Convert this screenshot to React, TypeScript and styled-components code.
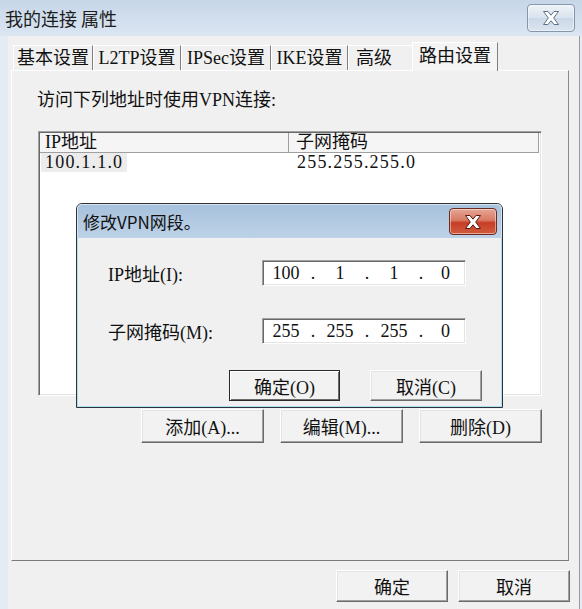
import styled, { createGlobalStyle } from 'styled-components';

const GlobalStyle = createGlobalStyle`
  html, body {
    margin: 0;
    padding: 0;
    background: #f0f0f0;
  }
  body {
    font-family: "Liberation Serif", "Noto Sans CJK SC", serif;
    color: #111;
  }
`;

const Window = styled.div`
  position: relative;
  width: 582px;
  height: 609px;
  overflow: hidden;
  display: flex;
  flex-direction: column;
  background: #f0f0f0;
`;

const TitleBar = styled.div`
  flex: none;
  height: 36px;
  box-sizing: border-box;
  display: flex;
  align-items: center;
  justify-content: space-between;
  padding: 0 7px 0 5px;
  background: linear-gradient(#c6d6e8, #dbe6f2);
`;

const TitleText = styled.span`
  font-family: "Noto Sans CJK SC", sans-serif;
  font-size: 18px;
  color: #1c1c1c;
`;

const CaptionButton = styled.div<{ $danger?: boolean }>`
  width: 48px;
  height: ${(p) => (p.$danger ? 27 : 28)}px;
  box-sizing: border-box;
  display: flex;
  align-items: center;
  justify-content: center;
  border: 1px solid ${(p) => (p.$danger ? '#6e2a1e' : '#8596ab')};
  border-radius: 4px;
  background: ${(p) =>
    p.$danger
      ? 'linear-gradient(#e6a696 0%, #d97a63 45%, #c63d24 55%, #d25c40 100%)'
      : 'linear-gradient(#eef3f8, #d9e3ee 50%, #cbd8e7 51%, #dbe5f0)'};
  box-shadow: inset 0 0 0 1px rgba(255, 255, 255, 0.45);
`;

const Frame = styled.div`
  flex: 1;
  display: flex;
  background: #e4ebf2;
  padding: 0 2px 0 8px;
`;

const Body = styled.div`
  flex: 1;
  display: flex;
  flex-direction: column;
  background: #f0f0f0;
  border-right: 1px solid #9a9a9a;
  padding: 6px 0 0 3px;
`;

const TabStrip = styled.div`
  position: relative;
  z-index: 1;
  display: flex;
  align-items: flex-end;
  height: 28px;
  padding-left: 2px;
`;

const Tab = styled.div<{ $active?: boolean; $w: number; $last?: boolean }>`
  box-sizing: border-box;
  width: ${(p) => p.$w}px;
  height: ${(p) => (p.$active ? 29 : 25)}px;
  margin-bottom: ${(p) => (p.$active ? -1 : 0)}px;
  text-align: ${(p) => (p.$last ? 'left' : 'center')};
  padding-left: ${(p) => (p.$last ? 7 : 0)}px;
  font-size: 18px;
  line-height: ${(p) => (p.$active ? 27 : 24)}px;
  white-space: nowrap;
  border-top: 1px solid #fff;
  border-left: 1px solid #fff;
  border-right: 1px solid ${(p) => (p.$last ? 'transparent' : '#7f7f7f')};
  background: ${(p) => (p.$active ? '#f4f4f4' : '#f0f0f0')};
`;

const Panel = styled.div`
  box-sizing: border-box;
  width: 558px;
  height: 491px;
  display: flex;
  flex-direction: column;
  border: 1px solid;
  border-color: #fff #8a8a8a #7a7a7a #fff;
  padding: 18px 0 0 25px;
`;

const Caption = styled.div`
  font-size: 18px;
  line-height: 22px;
`;

const ListBox = styled.div`
  box-sizing: border-box;
  width: 504px;
  height: 265px;
  margin: 20px 0 0 1px;
  background: #fff;
  border: 1px solid;
  border-color: #a0a0a0 #fff #fff #a0a0a0;
  box-shadow: inset 1px 1px 0 #696969, inset -1px -1px 0 #e3e3e3;
  padding: 1px 1px 0 1px;
`;

const ListRow = styled.div<{ $header?: boolean }>`
  display: flex;
  height: ${(p) => (p.$header ? 19 : 20)}px;
  font-size: 18px;
  line-height: 19px;
  background: ${(p) => (p.$header ? '#f5f5f5' : 'transparent')};
  border-bottom: 1px solid ${(p) => (p.$header ? '#a0a0a0' : 'transparent')};
  margin-right: ${(p) => (p.$header ? 1 : 0)}px;
`;

const Cell = styled.div<{ $w: number; $pad: number; $header?: boolean }>`
  box-sizing: border-box;
  width: ${(p) => p.$w}px;
  padding-left: ${(p) => p.$pad}px;
  border-right: 1px solid ${(p) => (p.$header ? '#a0a0a0' : 'transparent')};
  white-space: nowrap;
`;

const Address = styled.span<{ $focused?: boolean }>`
  display: inline-block;
  letter-spacing: 1.2px;
  ${(p) =>
    p.$focused
      ? `
    margin-left: -4px;
    padding: 0 4px;
    background: #ececec;
  `
      : ''}
`;

const ButtonRow = styled.div<{ $gap: number; $top: number; $w?: number }>`
  display: flex;
  justify-content: flex-end;
  gap: ${(p) => p.$gap}px;
  margin-top: ${(p) => p.$top}px;
  ${(p) => (p.$w ? `width: ${p.$w}px;` : '')}
`;

const Button = styled.button<{ $w: number; $h: number; $default?: boolean }>`
  box-sizing: border-box;
  width: ${(p) => p.$w}px;
  height: ${(p) => p.$h}px;
  padding: 0;
  font-family: "Liberation Serif", "Noto Sans CJK SC", serif;
  font-size: 18px;
  color: #111;
  background: #f2f2f2;
  border: 1px solid;
  border-color: ${(p) => (p.$default ? '#2a2a2a' : '#fff #6b6b6b #6b6b6b #fff')};
  box-shadow: ${(p) =>
    p.$default
      ? 'inset 1px 1px 0 #fff, inset -1px -1px 0 #6b6b6b'
      : 'inset -1px -1px 0 #a0a0a0, inset 1px 1px 0 #e3e3e3'};
`;

const Dialog = styled.div`
  position: absolute;
  left: 76px;
  top: 203px;
  width: 427px;
  height: 205px;
  box-sizing: border-box;
  display: flex;
  flex-direction: column;
  border: 1px solid #2f3338;
  border-radius: 6px 6px 0 0;
  overflow: hidden;
  background: #f0f0f0;
`;

const DialogTitle = styled.div`
  flex: none;
  height: 34px;
  box-sizing: border-box;
  display: flex;
  align-items: center;
  justify-content: space-between;
  padding: 0 4px 0 5px;
  background: linear-gradient(#a7c1dc, #bdd2e8);
  border: 1px solid #d6e4f1;
  border-bottom: none;
  border-radius: 5px 5px 0 0;
`;

const DialogTitleText = styled.span`
  font-family: "Noto Sans CJK SC", sans-serif;
  font-size: 17px;
  color: #111;
`;

const DialogBody = styled.div`
  flex: 1;
  border: 1px solid #a6e1f2;
  border-top: none;
  padding: 22px 19px 0 30px;
`;

const FieldGrid = styled.div`
  display: grid;
  grid-template-columns: 154px 204px;
  grid-auto-rows: 26px;
  row-gap: 32px;
  align-items: center;
`;

const FieldLabel = styled.div`
  font-size: 18px;
`;

const IpBox = styled.div`
  box-sizing: border-box;
  height: 26px;
  display: flex;
  align-items: center;
  padding-left: 2px;
  background: #fff;
  border: 1px solid;
  border-color: #a0a0a0 #fff #fff #a0a0a0;
  box-shadow: inset 1px 1px 0 #696969, inset -1px -1px 0 #e3e3e3;
  font-size: 18px;
`;

const Octet = styled.span<{ $w: number }>`
  width: ${(p) => p.$w}px;
  text-align: center;
`;

const Dot = styled.span`
  width: 12px;
  text-align: center;
`;

function CloseGlyph({ stroke }: { stroke: string }) {
  return (
    <svg width="18" height="16" viewBox="0 0 18 16">
      <polygon
        points="1.5,1.5 6,1.5 9,5.2 12,1.5 16.5,1.5 11.7,8 16.5,14.5 12,14.5 9,10.8 6,14.5 1.5,14.5 6.3,8"
        fill="#fff"
        stroke={stroke}
        strokeWidth="1"
        strokeLinejoin="round"
      />
    </svg>
  );
}

function IpField({ parts }: { parts: string[] }) {
  return (
    <IpBox>
      {parts.map((v, i) => (
        <span key={i} style={{ display: 'contents' }}>
          <Octet $w={i === 3 ? 37 : 42}>{v}</Octet>
          {i < 3 && <Dot>.</Dot>}
        </span>
      ))}
    </IpBox>
  );
}

const tabs = [
  { label: '基本设置', w: 80 },
  { label: 'L2TP设置', w: 88 },
  { label: 'IPSec设置', w: 90 },
  { label: 'IKE设置', w: 77 },
  { label: '高级', w: 64, last: true },
];

export default function App() {
  return (
    <>
      <GlobalStyle />
      <Window>
        <TitleBar>
          <TitleText>我的连接 属性</TitleText>
          <CaptionButton>
            <CloseGlyph stroke="#5f6f84" />
          </CaptionButton>
        </TitleBar>
        <Frame>
          <Body>
            <TabStrip>
              {tabs.map((t) => (
                <Tab key={t.label} $w={t.w} $last={t.last}>
                  {t.label}
                </Tab>
              ))}
              <Tab $w={86} $active>
                路由设置
              </Tab>
            </TabStrip>
            <Panel>
              <Caption>访问下列地址时使用VPN连接:</Caption>
              <ListBox>
                <ListRow $header>
                  <Cell $w={249} $pad={5} $header>
                    IP地址
                  </Cell>
                  <Cell $w={250} $pad={7} $header>
                    子网掩码
                  </Cell>
                </ListRow>
                <ListRow>
                  <Cell $w={249} $pad={5}>
                    <Address $focused>100.1.1.0</Address>
                  </Cell>
                  <Cell $w={250} $pad={8}>
                    <Address>255.255.255.0</Address>
                  </Cell>
                </ListRow>
              </ListBox>
              <ButtonRow $gap={16} $top={13} $w={505}>
                <Button $w={123} $h={34}>添加(A)...</Button>
                <Button $w={123} $h={34}>编辑(M)...</Button>
                <Button $w={123} $h={34}>删除(D)</Button>
              </ButtonRow>
            </Panel>
            <ButtonRow $gap={10} $top={9} $w={559}>
              <Button $w={112} $h={32}>确定</Button>
              <Button $w={112} $h={32}>取消</Button>
            </ButtonRow>
          </Body>
        </Frame>

        <Dialog>
          <DialogTitle>
            <DialogTitleText>修改VPN网段。</DialogTitleText>
            <CaptionButton $danger>
              <CloseGlyph stroke="#5a1a10" />
            </CaptionButton>
          </DialogTitle>
          <DialogBody>
            <FieldGrid>
              <FieldLabel>IP地址(I):</FieldLabel>
              <IpField parts={['100', '1', '1', '0']} />
              <FieldLabel>子网掩码(M):</FieldLabel>
              <IpField parts={['255', '255', '255', '0']} />
            </FieldGrid>
            <ButtonRow $gap={30} $top={26}>
              <Button $w={111} $h={31} $default>确定(O)</Button>
              <Button $w={112} $h={31}>取消(C)</Button>
            </ButtonRow>
          </DialogBody>
        </Dialog>
      </Window>
    </>
  );
}
